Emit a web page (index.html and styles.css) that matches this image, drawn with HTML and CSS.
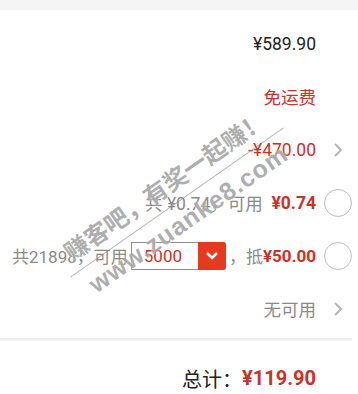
FILE: index.html
```html
<!DOCTYPE html>
<html lang="zh">
<head>
<meta charset="utf-8">
<link rel="stylesheet" href="styles.css">
</head>
<body>
<div class="page">
  <div class="card">
    <div class="row">
      <span class="black">¥589.90</span>
      <span class="slot"></span>
    </div>
    <div class="row">
      <span class="red">免运费</span>
      <span class="slot"></span>
    </div>
    <div class="row">
      <span class="red">-¥470.00</span>
      <span class="slot chev-slot"><svg class="chev" viewBox="0 0 10 16" width="10" height="16"><path d="M2 2 L8 8 L2 14" fill="none" stroke="#b5b5b5" stroke-width="2"/></svg></span>
    </div>
    <div class="row">
      <span class="gray">共 ¥0.74，可用 </span><span class="red bold">&nbsp;¥0.74</span>
      <span class="slot radio-slot"><span class="radio"></span></span>
    </div>
    <div class="row row-wide">
      <span class="gray">共21898，可用</span>
      <span class="select">
        <span class="select-val">5000</span>
        <span class="select-btn"><svg viewBox="0 0 14 10" width="14" height="10"><path d="M2 2 L7 7 L12 2" fill="none" stroke="#fff" stroke-width="2.6"/></svg></span>
      </span>
      <span class="gray push">，抵</span><span class="red bold">¥50.00</span>
      <span class="slot radio-slot"><span class="radio"></span></span>
    </div>
    <div class="row">
      <span class="gray">无可用</span>
      <span class="slot chev-slot"><svg class="chev" viewBox="0 0 10 16" width="10" height="16"><path d="M2 2 L8 8 L2 14" fill="none" stroke="#b5b5b5" stroke-width="2"/></svg></span>
    </div>
    <div class="divider"></div>
    <div class="row total">
      <span class="black">总计：</span><span class="red bold">¥119.90</span>
      <span class="slot"></span>
    </div>
  </div>
  <div class="wm">
    <div class="wm-cn">赚客吧，有奖一起赚！</div>
    <div class="wm-line"></div>
    <div class="wm-url">www.zuanke8.com</div>
  </div>
</div>
</body>
</html>
```

FILE: styles.css
```css
* { box-sizing: border-box; }
html, body {
  margin: 0;
  padding: 0;
  background: #f5f5f5;
}
body {
  font-family: Roboto, "Noto Sans CJK SC", sans-serif;
  font-size: 17.5px;
}
.page {
  position: relative;
  width: 358px;
  height: 394px;
  overflow: hidden;
}
.card {
  margin-top: 10px;
  background: #fff;
  padding-top: 7px;
  height: 384px;
}
.row {
  display: flex;
  align-items: center;
  justify-content: flex-end;
  height: 53px;
  white-space: pre;
}
.row-wide {
  justify-content: flex-start;
  padding-left: 12px;
  font-size: 17px;
}
.row-wide .select { margin-left: 3px; }
.push { margin-left: auto; }
.slot {
  width: 42px;
  flex: none;
  display: flex;
  align-items: center;
  height: 100%;
}
.chev-slot { padding-left: 17px; }
.radio-slot { padding-left: 8px; }
.radio {
  width: 28px;
  height: 28px;
  border-radius: 50%;
  border: 1.5px solid #bdbdbd;
  background: #fff;
}
.black { color: #222; }
.red { color: #cc3128; }
.gray { color: #8a8a8a; }
.bold { font-weight: 700; }
.select {
  display: flex;
  flex: none;
  height: 28px;
  width: 95px;
  border: 1px solid #8f8f8f;
  border-right: none;
  border-radius: 0 3px 3px 0;
  background: #fff;
}
.select-val {
  flex: 1;
  color: #cc3128;
  display: flex;
  align-items: center;
  padding-left: 12px;
}
.select-btn {
  width: 28px;
  margin: -1px 0;
  height: 28px;
  background: #e63a1f;
  border-radius: 0 3px 3px 0;
  display: flex;
  align-items: center;
  justify-content: center;
}
.divider {
  margin-top: 3px;
  margin-right: 6px;
  height: 3px;
  border-top: 1px solid #ededed;
  background: #f4f4f4;
}
.total {
  height: 74px;
  font-size: 20px;
}
.wm {
  position: absolute;
  left: 47px;
  top: 168px;
  width: 260px;
  transform: rotate(-35deg);
  transform-origin: center;
  text-align: center;
  color: rgba(120, 120, 120, 0.6);
  font-weight: 700;
  pointer-events: none;
}
.wm-cn {
  font-size: 24px;
  line-height: 30px;
  text-shadow: 0 0 2px #fff;
}
.wm-line {
  height: 1px;
  background: rgba(130, 130, 130, 0.6);
  margin: 4px 0;
}
.wm-url {
  font-family: "Liberation Sans", sans-serif;
  font-size: 25px;
  line-height: 30px;
  letter-spacing: 1px;
  text-shadow: 0 0 2px #fff;
}
```
